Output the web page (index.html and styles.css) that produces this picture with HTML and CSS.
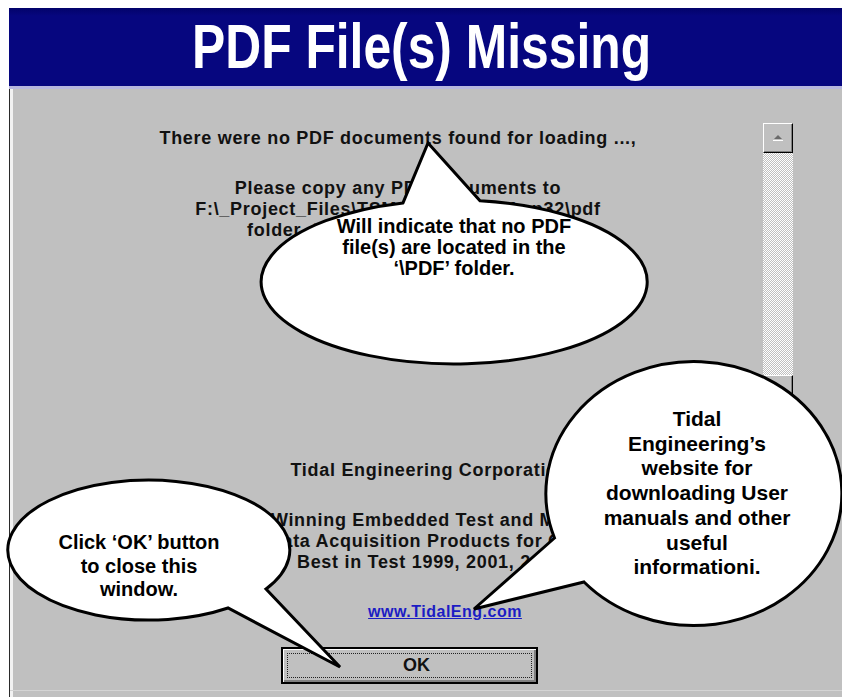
FILE: index.html
```html
<!DOCTYPE html>
<html lang="en">
<head>
  <meta charset="UTF-8">
  <title>PDF File(s) Missing</title>
  <link rel="stylesheet" href="styles.css">
</head>
<body>

<div class="window">
  <div class="titlebar">
    <h1 class="title">PDF File(s) Missing</h1>
  </div>
  <div class="panel">
    <div class="panel-inner">
      <div class="msg-row">
        <div class="msg">
          <p>There were no PDF documents found for loading ...,</p>
          <p class="para">Please copy any PDF documents to<br>F:\_Project_Files\TSM_Apps\TidalApp32\pdf<br>folder, then restart this program.</p>
        </div>
        <div class="scrollbar">
          <div class="sb-btn">
            <svg width="14" height="10" viewBox="0 0 14 10"><path d="M3 6 L7 2 L11 6 Z" fill="#6a6a6a"/><path d="M2 7.5 H12" stroke="#fff" stroke-width="1"/></svg>
          </div>
          <div class="sb-track"></div>
          <div class="sb-btn">
            <svg width="14" height="10" viewBox="0 0 14 10"><path d="M3 3 L7 7 L11 3 Z" fill="#6a6a6a"/></svg>
          </div>
        </div>
      </div>
      <div class="info">
        <p>Tidal Engineering Corporation</p>
        <p class="para">Award Winning Embedded Test and Measurement<br>Data Acquisition Products for OEM<br>Best in Test 1999, 2001, 2002</p>
        <a class="site" href="#">www.TidalEng.com</a>
        <button class="ok"><span>OK</span></button>
      </div>
    </div>
  </div>
</div>

<!-- callouts drawn over the dialog -->
<svg class="callouts" width="842" height="697" viewBox="0 0 842 697">
  <path d="M403 202.9 L428 143 L480 200.7 A193 82 0 1 1 403 202.9 Z"/>
  <path d="M554.5 538 L474 609 L584 582 A148 132 0 1 0 554.5 538 Z"/>
  <path d="M266 589 L340 667 L228 608 A141 70 0 1 1 266 589 Z"/>
</svg>

<div class="note note-pdf">Will indicate that no PDF<br>file(s) are located in the<br>&lsquo;\PDF&rsquo; folder.</div>
<div class="note note-web">Tidal<br>Engineering&rsquo;s<br>website for<br>downloading User<br>manuals and other<br>useful<br>informationi.</div>
<div class="note note-ok">Click &lsquo;OK&rsquo; button<br>to close this<br>window.</div>

</body>
</html>
```
FILE: styles.css
```css
body {
  margin: 0;
  width: 842px;
  height: 697px;
  overflow: hidden;
  position: relative;
  background: #fff;
  font-family: "Liberation Sans", Arial, sans-serif;
}
p {
  margin: 0;
}
.window {
  margin: 8px 0 0 9px;
}
.titlebar {
  height: 78px;
  background: linear-gradient(#02026a, #06067f 8px, #06067f);
  border-bottom: 3px solid #b6b6de;
  display: flex;
  justify-content: center;
  align-items: center;
  padding-right: 8px;
}
.title {
  margin: 0 0 2px;
  color: #fff;
  font-size: 63px;
  font-weight: bold;
  line-height: 1;
  transform: scaleX(.79);
}
.panel {
  height: 608px;
  box-sizing: border-box;
  background: #c0c0c0;
  border-left: 1px solid #2a2a2a;
  box-shadow: inset 3px 0 #f2f2f2;
}
.panel-inner {
  height: 602px;
  box-sizing: border-box;
  border-bottom: 1px solid #d4d4d4;
}
.msg-row {
  display: flex;
  align-items: flex-start;
  padding: 34px 0 0 133px;
}
.msg, .info {
  width: 510px;
  text-align: center;
  font-size: 18px;
  font-weight: bold;
  letter-spacing: .7px;
  line-height: 21px;
  color: #111;
  white-space: nowrap;
}
.msg {
  padding-top: 5px;
}
.para {
  margin-top: 29px;
}
.scrollbar {
  margin-left: 110px;
  width: 30px;
  display: flex;
  flex-direction: column;
}
.sb-btn {
  height: 30px;
  box-sizing: border-box;
  background: #c0c0c0;
  border: 1px solid;
  border-color: #fff #000 #000 #fff;
  box-shadow: inset -1px -1px #808080;
  display: flex;
  justify-content: center;
  align-items: center;
}
.sb-track {
  height: 222px;
  background: repeating-conic-gradient(#c0c0c0 0 25%, #fff 0 50%) 0 0 / 2px 2px;
}
.info {
  box-sizing: border-box;
  margin: 55px 0 0 133px;
  padding-left: 64px;
}
.site {
  display: block;
  margin-top: 28px;
  padding-left: 30px;
  font-size: 16px;
  letter-spacing: .5px;
  color: #1c1cc4;
  text-decoration: underline;
}
.ok {
  display: block;
  margin: 25px 0 0 74px;
  width: 257px;
  height: 37px;
  padding: 4px;
  background: #c0c0c0;
  border: 2px solid #000;
  box-shadow: inset 1px 1px #fff, inset -2px -2px #808080;
  font-family: "Liberation Sans", Arial, sans-serif;
  font-size: 18px;
  font-weight: bold;
  color: #111;
}
.ok span {
  display: block;
  height: 100%;
  box-sizing: border-box;
  border: 1px dotted #222;
  line-height: 23px;
  padding-left: 14px;
}
.callouts {
  position: absolute;
  top: 0;
  left: 0;
}
.callouts path {
  fill: #fff;
  stroke: #000;
  stroke-width: 3;
}
.note {
  position: absolute;
  text-align: center;
  font-weight: bold;
  color: #000;
}
.note-pdf {
  left: 254px;
  top: 216px;
  width: 400px;
  font-size: 20px;
  line-height: 21px;
}
.note-web {
  left: 597px;
  top: 407px;
  width: 200px;
  font-size: 21px;
  line-height: 24.7px;
}
.note-ok {
  left: 39px;
  top: 531px;
  width: 200px;
  font-size: 20px;
  line-height: 23.5px;
}
```
